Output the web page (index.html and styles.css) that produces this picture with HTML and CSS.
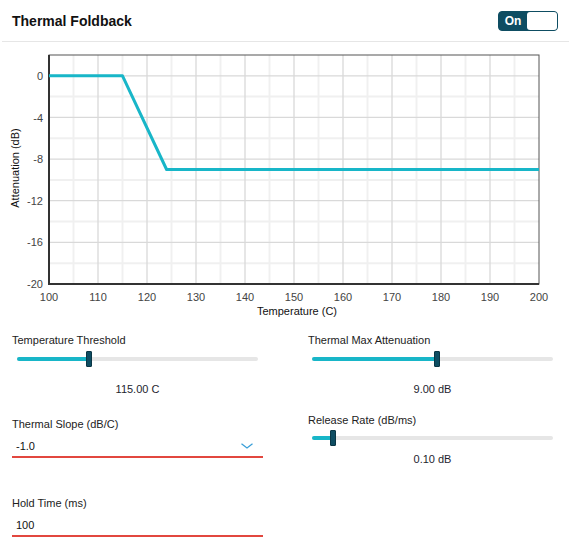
FILE: index.html
```html
<!DOCTYPE html>
<html lang="en">
<head>
    <meta charset="UTF-8">
    <meta name="viewport" content="width=device-width, initial-scale=1.0">
    <title>Thermal Foldback</title>
    <link rel="stylesheet" href="styles.css">
</head>
<body>

<div class="header">
    <h1>Thermal Foldback</h1>
    <div class="toggle">
        <span class="toggle-label">On</span>
        <span class="toggle-knob"></span>
    </div>
</div>

<!-- График -->
<svg class="chart" viewBox="0 42 569 280" width="569" height="280">
    <g class="grid-minor">
        <line x1="73.5" y1="55" x2="73.5" y2="284"/>
        <line x1="122.5" y1="55" x2="122.5" y2="284"/>
        <line x1="171.5" y1="55" x2="171.5" y2="284"/>
        <line x1="220.5" y1="55" x2="220.5" y2="284"/>
        <line x1="269.5" y1="55" x2="269.5" y2="284"/>
        <line x1="318.5" y1="55" x2="318.5" y2="284"/>
        <line x1="367.5" y1="55" x2="367.5" y2="284"/>
        <line x1="416.5" y1="55" x2="416.5" y2="284"/>
        <line x1="465.5" y1="55" x2="465.5" y2="284"/>
        <line x1="514.5" y1="55" x2="514.5" y2="284"/>
        <line x1="49" y1="96.6" x2="539" y2="96.6"/>
        <line x1="49" y1="138.3" x2="539" y2="138.3"/>
        <line x1="49" y1="179.9" x2="539" y2="179.9"/>
        <line x1="49" y1="221.6" x2="539" y2="221.6"/>
        <line x1="49" y1="263.2" x2="539" y2="263.2"/>
    </g>
    <g class="grid-major">
        <line x1="98" y1="55" x2="98" y2="284"/>
        <line x1="147" y1="55" x2="147" y2="284"/>
        <line x1="196" y1="55" x2="196" y2="284"/>
        <line x1="245" y1="55" x2="245" y2="284"/>
        <line x1="294" y1="55" x2="294" y2="284"/>
        <line x1="343" y1="55" x2="343" y2="284"/>
        <line x1="392" y1="55" x2="392" y2="284"/>
        <line x1="441" y1="55" x2="441" y2="284"/>
        <line x1="490" y1="55" x2="490" y2="284"/>
        <line x1="49" y1="75.8" x2="539" y2="75.8"/>
        <line x1="49" y1="117.4" x2="539" y2="117.4"/>
        <line x1="49" y1="159.1" x2="539" y2="159.1"/>
        <line x1="49" y1="200.7" x2="539" y2="200.7"/>
        <line x1="49" y1="242.4" x2="539" y2="242.4"/>
    </g>
    <rect class="frame" x="49" y="55" width="490" height="229"/>
    <polyline class="axis" points="49,55 49,284 539,284"/>
    <polyline class="curve" points="49,75.8 122.5,75.8 166.6,169.5 539,169.5"/>

    <g class="tick-y">
        <text x="43" y="80">0</text>
        <text x="43" y="121.5">-4</text>
        <text x="43" y="163">-8</text>
        <text x="43" y="204.5">-12</text>
        <text x="43" y="246">-16</text>
        <text x="43" y="288">-20</text>
    </g>
    <g class="tick-x">
        <text x="49" y="301">100</text>
        <text x="98" y="301">110</text>
        <text x="147" y="301">120</text>
        <text x="196" y="301">130</text>
        <text x="245" y="301">140</text>
        <text x="294" y="301">150</text>
        <text x="343" y="301">160</text>
        <text x="392" y="301">170</text>
        <text x="441" y="301">180</text>
        <text x="490" y="301">190</text>
        <text x="539" y="301">200</text>
    </g>
    <text class="axis-title" x="297" y="315">Temperature (C)</text>
    <text class="axis-title" x="0" y="0" transform="translate(19 168) rotate(-90)">Attenuation (dB)</text>
</svg>

<div class="controls">
    <div class="column">
        <div class="label">Temperature Threshold</div>
        <div class="track"><div class="fill" style="width:30%"></div></div>
        <div class="value">115.00 C</div>

        <div class="label label-slope">Thermal Slope (dB/C)</div>
        <div class="field">
            <span>-1.0</span>
            <svg class="chevron" width="12" height="6" viewBox="0 0 12 6">
                <polyline points="0.5,0.8 6,5 11.5,0.8"/>
            </svg>
        </div>

        <div class="label label-hold">Hold Time (ms)</div>
        <div class="field">
            <span>100</span>
        </div>
    </div>

    <div class="column">
        <div class="label">Thermal Max Attenuation</div>
        <div class="track"><div class="fill" style="width:52%"></div></div>
        <div class="value">9.00 dB</div>

        <div class="label label-release">Release Rate (dB/ms)</div>
        <div class="track track-release"><div class="fill" style="width:8.7%"></div></div>
        <div class="value value-release">0.10 dB</div>
    </div>
</div>

</body>
</html>
```

FILE: styles.css
```css
body {
    font-family: "Liberation Sans", Arial, sans-serif;
    background-color: #fff;
    color: #222;
    margin: 0;
    padding: 0;
    width: 569px;
}
.header {
    height: 41px;
    display: flex;
    align-items: center;
    justify-content: space-between;
    padding: 0 11px 0 12px;
    border-bottom: 1px solid #e6e6e6;
    margin-left: 2px;
    padding-left: 10px;
}
.header h1 {
    font-size: 14px;
    font-weight: bold;
    color: #111;
    margin: 0;
    padding-top: 1px;
}
.toggle {
    width: 60px;
    height: 20px;
    box-sizing: border-box;
    background: #0e4d62;
    border: 1px solid #0e4d62;
    border-radius: 4px;
    display: flex;
    align-items: center;
}
.toggle-label {
    color: white;
    font-size: 12px;
    font-weight: bold;
    width: 28px;
    text-align: center;
}
.toggle-knob {
    flex: 1;
    height: 100%;
    background: white;
    border-radius: 3px;
}
.chart {
    display: block;
}
.grid-minor line {
    stroke: #f0f0f0;
    stroke-width: 2;
}
.grid-major line {
    stroke: #d9d9d9;
    stroke-width: 1.3;
}
.frame {
    fill: none;
    stroke: #555;
    stroke-width: 1;
}
.axis {
    fill: none;
    stroke: #333;
    stroke-width: 2;
}
.curve {
    fill: none;
    stroke: #18b6c8;
    stroke-width: 3;
    stroke-linejoin: round;
}
.tick-y text, .tick-x text {
    font-size: 11px;
    fill: #444;
}
.tick-y text {
    text-anchor: end;
}
.tick-x text {
    text-anchor: middle;
}
.axis-title {
    font-size: 11px;
    fill: #111;
    text-anchor: middle;
}
.controls {
    display: grid;
    grid-template-columns: 251px 249px;
    column-gap: 45px;
    padding: 11px 12px 0 12px;
}
.column {
    display: flex;
    flex-direction: column;
}
.label {
    font-size: 11px;
    line-height: 14px;
}
.track {
    height: 4px;
    width: 241px;
    margin: 10px 0 0 5px;
    background: #e6e6e6;
    border-radius: 2px;
}
.column + .column .track {
    margin-left: 4px;
}
.fill {
    position: relative;
    height: 100%;
    background: #18b6c8;
    border-radius: 2px 0 0 2px;
}
.fill::after {
    content: "";
    position: absolute;
    right: -3px;
    top: -6px;
    width: 4px;
    height: 14px;
    background: #0e4d62;
    border: 1px solid #0a3645;
    border-radius: 1px;
}
.value {
    width: 241px;
    margin: 21px 0 0 5px;
    text-align: center;
    font-size: 11px;
    line-height: 14px;
    color: #1e1e2e;
}
.column + .column .value {
    margin-left: 4px;
}
.label-slope {
    margin-top: 21px;
}
.label-hold {
    margin-top: 38px;
}
.label-release {
    margin-top: 17px;
}
.track-release {
    margin-top: 9px;
}
.value-release {
    margin-top: 12px;
}
.field {
    display: flex;
    align-items: center;
    justify-content: space-between;
    margin-top: 8px;
    padding: 0 10px 3px 4px;
    font-size: 11px;
    line-height: 14px;
    color: #111;
    border-bottom: 2px solid #e2473f;
}
.chevron polyline {
    fill: none;
    stroke: #3a9fd8;
    stroke-width: 1.3;
}
```
